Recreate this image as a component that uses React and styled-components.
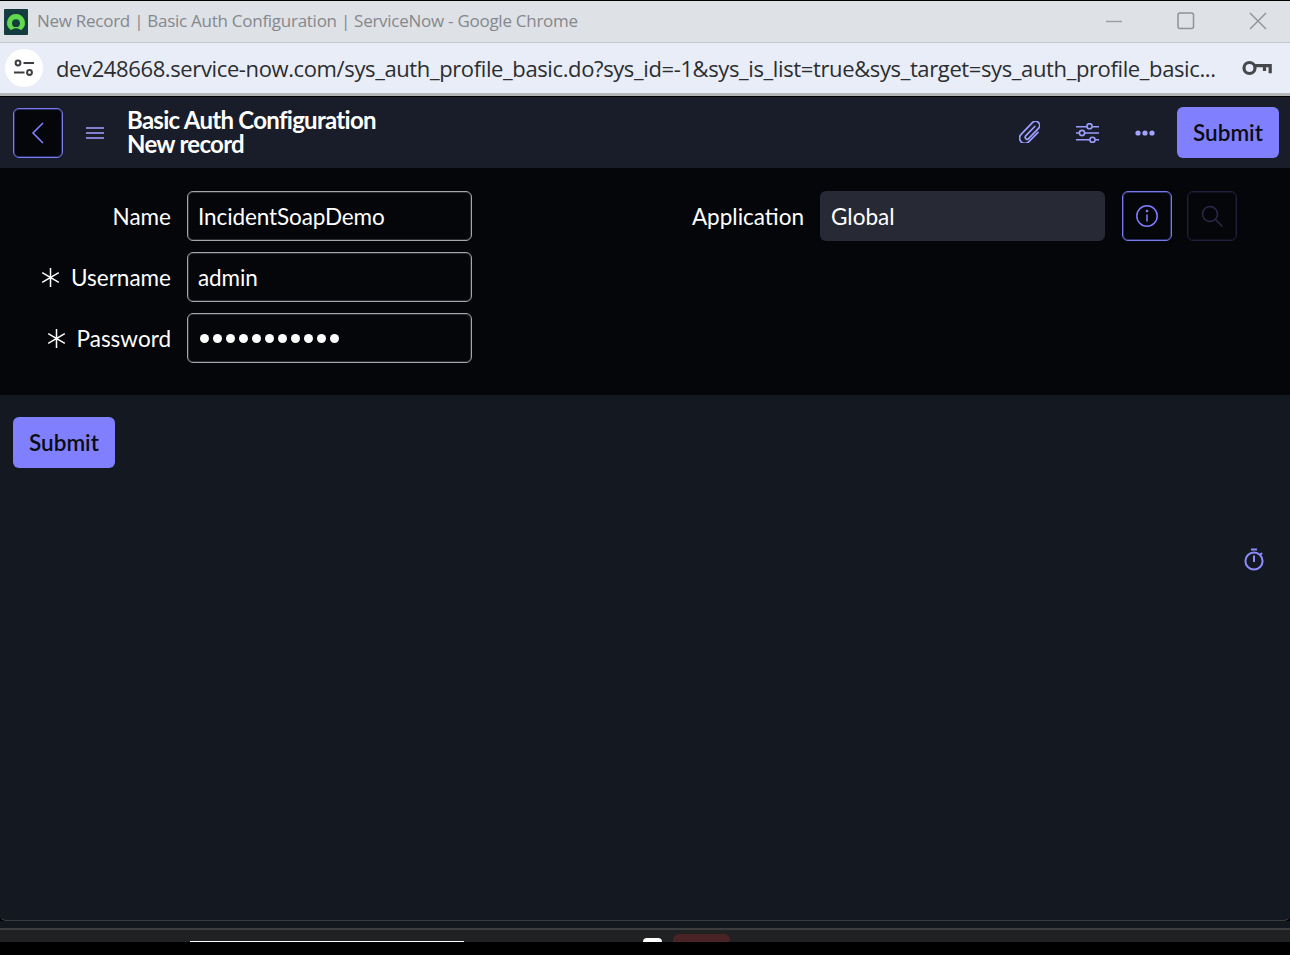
import styled, { createGlobalStyle } from "styled-components";

const GlobalStyle = createGlobalStyle`
  html, body {
    margin: 0;
    padding: 0;
    background: #000;
  }
  * {
    box-sizing: border-box;
  }
`;

const RequiredMark = () => (
  <Required width="19" height="19" viewBox="0 0 19 19" stroke="#fff" strokeWidth="1.5">
    <path d="M9.5 0v19M1.2 4.7l16.6 9.6M17.8 4.7L1.2 14.3" />
  </Required>
);

function App() {
  return (
    <Page>
      <GlobalStyle />
      <TitleBar>
        <Favicon viewBox="0 0 24 26">
          <rect width="24" height="26" rx="1" fill="#153c3e" />
          <path
            d="M12 5a8.9 8.9 0 0 0-6.2 15.3c.7.7 1.6.7 2.3.2a6.8 6.8 0 0 1 7.8 0c.7.5 1.6.5 2.3-.2A8.9 8.9 0 0 0 12 5z"
            fill="#62d84e"
          />
          <circle cx="12" cy="14.2" r="3.9" fill="#153c3e" />
        </Favicon>
        <WindowTitle>New Record | Basic Auth Configuration | ServiceNow - Google Chrome</WindowTitle>
        <WindowControls>
          <svg width="18" height="18" viewBox="0 0 18 18">
            <path d="M1 9.5h16" stroke="#9a9da1" strokeWidth="1.4" />
          </svg>
          <svg width="18" height="18" viewBox="0 0 18 18">
            <rect x="1" y="1" width="15.5" height="15.5" rx="2" fill="none" stroke="#8f9296" strokeWidth="1.5" />
          </svg>
          <svg width="18" height="18" viewBox="0 0 18 18">
            <path d="M1 1l16 16M17 1L1 17" stroke="#8f9296" strokeWidth="1.4" />
          </svg>
        </WindowControls>
      </TitleBar>

      <AddressBar>
        <SiteButton>
          <svg width="22" height="20" viewBox="0 0 22 20" fill="none" stroke="#3b3d40" strokeWidth="2">
            <circle cx="5" cy="5" r="2.4" />
            <path d="M10.5 5H21" />
            <circle cx="16.5" cy="14.5" r="2.4" />
            <path d="M1 14.5h10.5" />
          </svg>
        </SiteButton>
        <Url>dev248668.service-now.com/sys_auth_profile_basic.do?sys_id=-1&amp;sys_is_list=true&amp;sys_target=sys_auth_profile_basic...</Url>
        <svg width="30" height="16" viewBox="0 0 30 16" fill="none" stroke="#45474a" strokeWidth="3.2">
          <circle cx="7.5" cy="8" r="5.5" />
          <path d="M13 5.6h15.2v7.6M22.5 5.6v5.4" />
        </svg>
      </AddressBar>
      <ChromeEdge />

      <Header>
        <BackButton aria-label="Back">
          <svg width="14" height="24" viewBox="0 0 14 24" fill="none" stroke="#7f7fff" strokeWidth="1.6">
            <path d="M12 2L2 12l10 10" />
          </svg>
        </BackButton>
        <MenuIcon width="18" height="12" viewBox="0 0 18 12" stroke="#a3a3ff" strokeWidth="1.7">
          <path d="M0 1h18M0 6h18M0 11h18" />
        </MenuIcon>
        <Titles>
          <HeaderTitle>Basic Auth Configuration</HeaderTitle>
          <HeaderTitle>New record</HeaderTitle>
        </Titles>
        <HeaderActions>
          <ClipIcon width="21" height="22" viewBox="1 1.5 18.5 20" fill="none" stroke="#9c9cff" strokeWidth="1.6" strokeLinecap="round">
            <path d="M15 6.5L6.8 15a1.8 1.8 0 0 0 2.6 2.5l9-9.3a3.8 3.8 0 0 0-5.5-5.3L2.6 13.6a4.8 4.8 0 0 0 6.9 6.8l8.5-8.6" />
          </ClipIcon>
          <svg width="23" height="20" viewBox="0 0 23 20" fill="#181d29" stroke="#9c9cff" strokeWidth="1.6">
            <path d="M0 3.7h23M0 10h23M0 16.7h23" />
            <circle cx="13.5" cy="3.2" r="2.6" />
            <circle cx="6" cy="10" r="2.6" />
            <circle cx="16.5" cy="16.8" r="2.6" />
          </svg>
          <svg width="20" height="6" viewBox="0 0 20 6" fill="#a3a3ff">
            <circle cx="3" cy="3" r="2.6" />
            <circle cx="10" cy="3" r="2.6" />
            <circle cx="17" cy="3" r="2.6" />
          </svg>
        </HeaderActions>
        <SubmitButton>Submit</SubmitButton>
      </Header>

      <FormArea>
        <FormColumn>
          <FieldRow>
            <FieldLabel>Name</FieldLabel>
            <TextField>IncidentSoapDemo</TextField>
          </FieldRow>
          <FieldRow>
            <FieldLabel>
              <RequiredMark />
              Username
            </FieldLabel>
            <TextField>admin</TextField>
          </FieldRow>
          <FieldRow>
            <FieldLabel>
              <RequiredMark />
              Password
            </FieldLabel>
            <TextField>
              <Dots>
                {Array.from({ length: 11 }).map((_, i) => (
                  <Dot key={i} />
                ))}
              </Dots>
            </TextField>
          </FieldRow>
        </FormColumn>
        <ApplicationRow>
          <ApplicationLabel>Application</ApplicationLabel>
          <ReadonlyField>Global</ReadonlyField>
          <FieldButtons>
            <SquareButton $active aria-label="Info">
              <svg width="24" height="24" viewBox="0 0 24 24" fill="none" stroke="#7f7fff" strokeWidth="1.5">
                <circle cx="12" cy="12" r="10.2" />
                <path d="M12 10.5v7" />
                <circle cx="12" cy="7" r="0.6" />
              </svg>
            </SquareButton>
            <SquareButton aria-label="Search">
              <svg width="24" height="24" viewBox="0 0 24 24" fill="none" stroke="#2a2a4c" strokeWidth="1.5">
                <circle cx="10" cy="10" r="7.5" />
                <path d="M15.5 15.5l7 7" />
              </svg>
            </SquareButton>
          </FieldButtons>
        </ApplicationRow>
      </FormArea>

      <Body>
        <SubmitButton>Submit</SubmitButton>
        <TimerIcon width="20" height="24" viewBox="0 0 20 24" fill="none" stroke="#8c8cff" strokeWidth="2">
          <path d="M7 1.5h6" />
          <circle cx="10" cy="13" r="8.6" />
          <path d="M10 7.5v6.5" />
          <path d="M16.5 5l1.5 1.5" />
        </TimerIcon>
      </Body>

      <Gap />
      <Strip>
        <WhiteBar />
        <WhiteDot />
        <RedTab />
      </Strip>
    </Page>
  );
}

export default App;

const Page = styled.div`
  height: 955px;
  display: flex;
  flex-direction: column;
  overflow: hidden;
  background: #000;
  padding-top: 1px;
  font-family: "Lato", "Liberation Sans", sans-serif;
`;

const TitleBar = styled.div`
  height: 41px;
  flex: none;
  display: flex;
  align-items: center;
  padding: 0 0 2px 4px;
  background: #dee1e6;
`;

const Favicon = styled.svg`
  width: 24px;
  height: 26px;
  flex: none;
  margin-top: 2px;
`;

const WindowTitle = styled.div`
  margin-left: 9px;
  font-family: "Open Sans", sans-serif;
  font-size: 17px;
  letter-spacing: -0.27px;
  color: #85888c;
  white-space: nowrap;
`;

const WindowControls = styled.div`
  margin-left: auto;
  display: flex;
  align-items: center;
  gap: 54px;
  padding-right: 23px;
`;

const AddressBar = styled.div`
  height: 51px;
  flex: none;
  display: flex;
  align-items: center;
  padding: 0 18px 0 5px;
  background: #e9edf7;
  border-top: 1px solid #c5c8cd;
`;

const SiteButton = styled.div`
  width: 38px;
  height: 38px;
  flex: none;
  border-radius: 50%;
  background: #fff;
  display: flex;
  align-items: center;
  justify-content: center;
`;

const Url = styled.div`
  flex: 1;
  margin-left: 13px;
  font-family: "Open Sans", sans-serif;
  font-size: 22px;
  letter-spacing: -0.38px;
  color: #2b2d30;
  white-space: nowrap;
  overflow: hidden;
`;

const ChromeEdge = styled.div`
  height: 4px;
  flex: none;
  background: #000;
  border-top: 3px solid #b4b6b9;
`;

const Header = styled.header`
  height: 71px;
  flex: none;
  display: flex;
  align-items: center;
  padding: 0 11px 0 13px;
  background: #181d29;
`;

const BackButton = styled.button`
  width: 50px;
  height: 50px;
  flex: none;
  padding: 0;
  display: flex;
  align-items: center;
  justify-content: center;
  background: #05060a;
  border: 1px solid #7a7af0;
  box-shadow: inset 0 0 0 1px #2c2c66;
  border-radius: 6px;
`;

const MenuIcon = styled.svg`
  margin-left: 23px;
  flex: none;
`;

const Titles = styled.div`
  margin: -2px 0 0 23px;
  display: flex;
  flex-direction: column;
`;

const HeaderTitle = styled.div`
  font-size: 24px;
  line-height: 24px;
  font-weight: 700;
  letter-spacing: -0.72px;
  color: #fff;
`;

const HeaderActions = styled.div`
  margin-left: auto;
  margin-right: 22px;
  display: flex;
  align-items: center;
  gap: 36px;
`;

const ClipIcon = styled.svg`
  margin-top: -2px;
`;

const SubmitButton = styled.button`
  width: 102px;
  height: 51px;
  padding: 0;
  flex: none;
  font-family: "Lato", sans-serif;
  font-size: 22.5px;
  font-weight: 600;
  color: #0b0c12;
  background: #8080ff;
  border: none;
  border-radius: 6px;
`;

const FormArea = styled.section`
  height: 227px;
  flex: none;
  display: flex;
  padding-top: 23px;
  background: #05060a;
`;

const FormColumn = styled.div`
  width: 472px;
  display: flex;
  flex-direction: column;
  gap: 11px;
`;

const FieldRow = styled.div`
  display: grid;
  grid-template-columns: 171px 285px;
  column-gap: 16px;
  align-items: center;
`;

const FieldLabel = styled.label`
  display: flex;
  justify-content: flex-end;
  align-items: center;
  font-size: 22.5px;
  color: #fff;
  white-space: nowrap;
`;

const Required = styled.svg`
  margin-right: 11px;
  flex: none;
`;

const TextField = styled.div`
  height: 50px;
  display: flex;
  align-items: center;
  padding: 0 10px;
  font-size: 22.5px;
  letter-spacing: -0.1px;
  color: #fff;
  background: #05060a;
  border: 1px solid #a4a6ab;
  box-shadow: inset 0 0 0 1px #2b2c31;
  border-radius: 6px;
`;

const Dots = styled.div`
  display: flex;
  gap: 4px;
  padding-left: 2px;
`;

const Dot = styled.span`
  width: 9px;
  height: 9px;
  border-radius: 50%;
  background: #fff;
`;

const ApplicationRow = styled.div`
  height: 50px;
  display: flex;
  align-items: center;
`;

const ApplicationLabel = styled(FieldLabel)`
  width: 332px;
`;

const ReadonlyField = styled.div`
  width: 285px;
  height: 50px;
  margin-left: 16px;
  display: flex;
  align-items: center;
  padding: 0 11px;
  font-size: 22.5px;
  color: #fff;
  background: #272a35;
  border-radius: 6px;
`;

const FieldButtons = styled.div`
  display: flex;
  gap: 15px;
  margin-left: 17px;
`;

const SquareButton = styled.button`
  width: 50px;
  height: 50px;
  padding: 0;
  display: flex;
  align-items: center;
  justify-content: center;
  background: transparent;
  border: 1px solid ${(p) => (p.$active ? "#7a7af0" : "#20203c")};
  box-shadow: inset 0 0 0 1px ${(p) => (p.$active ? "#2c2c66" : "#10101e")};
  border-radius: 6px;
`;

const Body = styled.main`
  position: relative;
  flex: 1;
  padding: 22px 13px;
  background: #141921;
  border-bottom: 1px solid #3a3c40;
  border-radius: 0 0 6px 6px;
`;

const TimerIcon = styled.svg`
  position: absolute;
  top: 153px;
  right: 26px;
`;

const Gap = styled.div`
  height: 7px;
  flex: none;
  background: #13171e;
`;

const Strip = styled.footer`
  height: 27px;
  flex: none;
  display: flex;
  align-items: flex-start;
  padding-left: 190px;
  background: linear-gradient(#202122 0 12px, #000 12px);
  border-top: 2px solid #3c3d3f;
  overflow: hidden;
`;

const WhiteBar = styled.div`
  width: 274px;
  height: 1px;
  margin-top: 11px;
  background: #fff;
`;

const WhiteDot = styled.div`
  width: 19px;
  height: 4px;
  margin: 8px 0 0 179px;
  background: #fff;
  border-radius: 10px 10px 0 0;
`;

const RedTab = styled.div`
  width: 57px;
  height: 8px;
  margin: 4px 0 0 11px;
  background: #4a2326;
  border-radius: 6px 6px 0 0;
`;
